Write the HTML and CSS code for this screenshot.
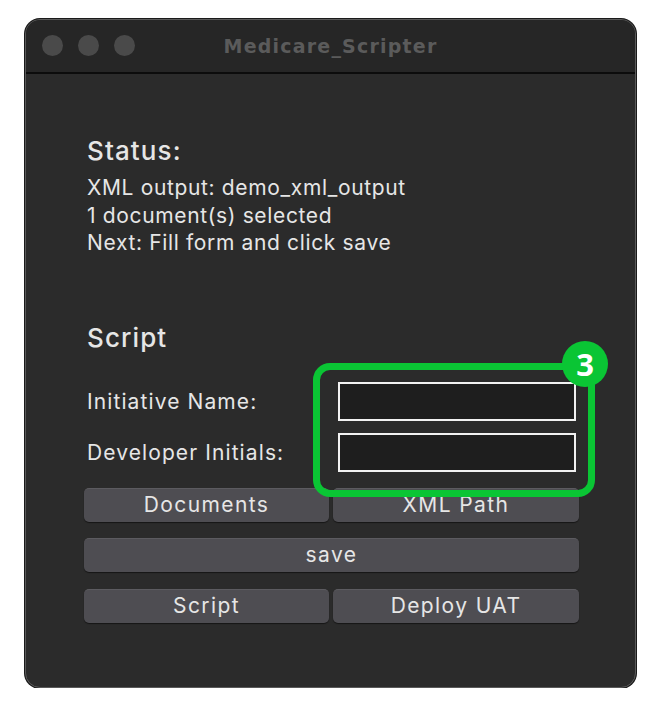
FILE: index.html
```html
<!DOCTYPE html>
<html lang="en">
<head>
  <meta charset="UTF-8" />
  <meta name="viewport" content="width=device-width, initial-scale=1" />
  <title>Medicare_Scripter</title>
  <link rel="stylesheet" href="styles.css">
</head>
<body>

  <div class="window">
    <div class="titlebar">
      <div class="lights">
        <span class="light"></span>
        <span class="light"></span>
        <span class="light"></span>
      </div>
      <div class="title">Medicare_Scripter</div>
    </div>

    <div class="content">
      <h2 class="heading">Status:</h2>
      <div class="status">
        <p>XML output: demo_xml_output</p>
        <p>1 document(s) selected</p>
        <p>Next: Fill form and click save</p>
      </div>

      <h2 class="heading script-heading">Script</h2>

      <div class="form">
        <div class="form-row">
          <label for="initiative">Initiative Name:</label>
          <input type="text" id="initiative" />
        </div>
        <div class="form-row">
          <label for="initials">Developer Initials:</label>
          <input type="text" id="initials" />
        </div>
        <div class="highlight"></div>
        <div class="badge">3</div>
      </div>

      <div class="buttons">
        <button class="btn">Documents</button>
        <button class="btn">XML Path</button>
        <button class="btn wide">save</button>
        <button class="btn">Script</button>
        <button class="btn">Deploy UAT</button>
      </div>
    </div>
  </div>

</body>
</html>
```

FILE: styles.css
```css
body {
  margin: 0;
  background: #ffffff;
  font-family: Inter, 'Liberation Sans', sans-serif;
}
.window {
  width: 609px;
  height: 667px;
  margin: 19px 0 0 25px;
  background: #2b2b2b;
  border: 1px solid #5a5a5a;
  border-radius: 15px;
  overflow: hidden;
  box-shadow: 0 0 0 1px #1a1a1a;
}
.titlebar {
  position: relative;
  height: 52px;
  background: #262626;
  border-bottom: 2px solid #0c0c0c;
  display: flex;
  align-items: center;
  justify-content: center;
}
.lights {
  position: absolute;
  left: 16px;
  top: 15px;
  display: flex;
  gap: 15px;
}
.light {
  width: 21px;
  height: 21px;
  border-radius: 50%;
  background: #4a4a4a;
}
.title {
  color: #5b5b5b;
  font-family: 'DejaVu Sans', sans-serif;
  font-weight: bold;
  font-size: 19px;
  letter-spacing: 1.2px;
}
.content {
  padding: 63px 0 0 58px;
  color: #e6e6e6;
}
.heading {
  margin: 0 0 9px 3px;
  font-size: 26px;
  font-weight: 500;
  line-height: 28px;
  letter-spacing: 1.1px;
}
.status {
  margin-left: 3px;
}
.status p {
  margin: 0;
  font-size: 21px;
  line-height: 27.5px;
  letter-spacing: 0.65px;
}
.script-heading {
  margin-top: 67px;
  margin-bottom: 30px;
}
.form {
  position: relative;
  display: flex;
  flex-direction: column;
  gap: 12px;
  margin-left: 3px;
}
.form-row {
  display: flex;
  align-items: center;
}
.form-row label {
  width: 251px;
  font-size: 21px;
  letter-spacing: 1.1px;
}
.form-row input {
  width: 238px;
  height: 39px;
  box-sizing: border-box;
  background: #1e1e1e;
  border: 2px solid #f2f2f2;
  color: #ffffff;
  font-size: 16px;
  padding: 0 6px;
  outline: none;
}
.highlight {
  position: absolute;
  left: 226px;
  top: -19px;
  width: 282px;
  height: 134px;
  box-sizing: border-box;
  border: 7px solid #0ac534;
  border-radius: 17px;
}
.badge {
  position: absolute;
  left: 475px;
  top: -41px;
  width: 46px;
  height: 46px;
  border-radius: 50%;
  background: #0ac534;
  color: #ffffff;
  font-family: 'Open Sans', sans-serif;
  font-weight: bold;
  font-size: 31px;
  line-height: 46px;
  text-align: center;
}
.buttons {
  display: grid;
  grid-template-columns: 245px 246px;
  column-gap: 4px;
  row-gap: 16.5px;
  margin-top: 16px;
  width: 495px;
}
.btn {
  height: 34px;
  background: #4e4d52;
  border: none;
  border-top: 1px solid #5c5b60;
  border-radius: 5px;
  box-shadow: 0 1px 1px rgba(0,0,0,0.5);
  color: #e6e6e6;
  font-family: Inter, 'Liberation Sans', sans-serif;
  font-size: 21px;
  letter-spacing: 1.4px;
  padding: 0 0 2px;
  cursor: pointer;
}
.btn.wide {
  grid-column: 1 / 3;
}
```
